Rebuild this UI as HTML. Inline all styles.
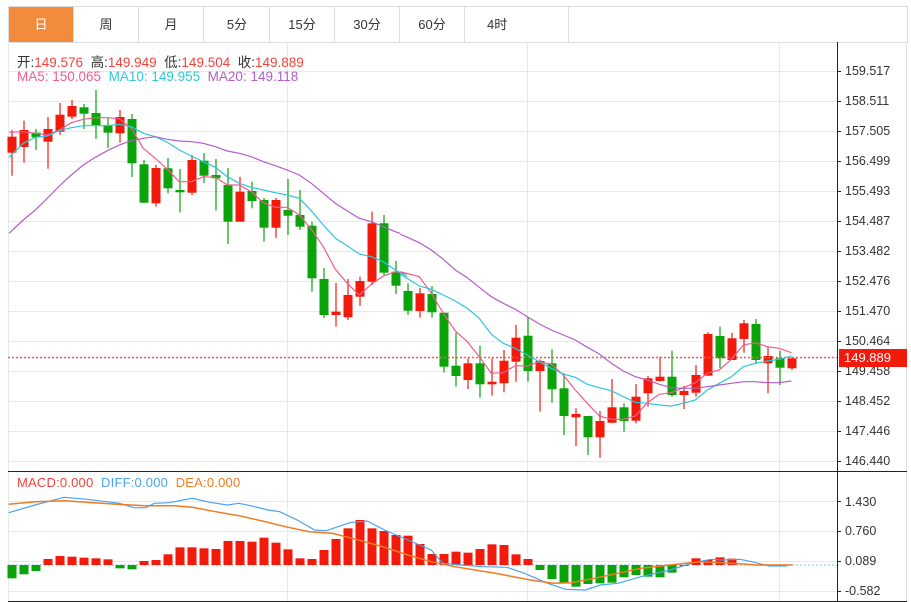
<!DOCTYPE html>
<html><head><meta charset="utf-8"><style>
body{margin:0;width:911px;height:602px;background:#fff;overflow:hidden;font-family:"Liberation Sans","Noto Sans CJK SC",sans-serif;position:relative}
.tabs{position:absolute;left:8px;top:6px;width:898px;height:35px;border:1px solid #ddd;}
.tab{position:absolute;top:0;height:35px;line-height:35px;text-align:center;font-size:13px;color:#333;border-right:1px solid #ddd;width:64px}
.tab.on{background:#f38b3c;color:#fff}
.info{position:absolute;left:17px;font-size:13.5px;white-space:pre}
.lab{position:absolute;left:845px;font-size:12.5px;color:#333;line-height:14px}
</style></head><body>
<div class="tabs">
<div class="tab on" style="left:0">日</div>
<div class="tab" style="left:65px">周</div>
<div class="tab" style="left:130px">月</div>
<div class="tab" style="left:196px">5分</div>
<div class="tab" style="left:261px">15分</div>
<div class="tab" style="left:326px">30分</div>
<div class="tab" style="left:391px">60分</div>
<div class="tab" style="left:456px;width:103px;text-align:left;padding-left:0"><span style="margin-left:22px">4时</span></div>
</div>
<svg id="s" width="911" height="602" style="position:absolute;left:0;top:0"></svg>
<div class="info" style="top:51px;color:#333">开:<span style="color:#f0433b">149.576</span>  高:<span style="color:#f0433b">149.949</span>  低:<span style="color:#f0433b">149.504</span>  收:<span style="color:#f0433b">149.889</span></div>
<div class="info" style="top:69px"><span style="color:#f25c8c">MA5: 150.065</span>  <span style="color:#2ec6dc">MA10: 149.955</span>  <span style="color:#b45cc8">MA20: 149.118</span></div>
<div class="info" style="top:475px;font-size:13px;letter-spacing:0.2px"><span style="color:#f0433b">MACD:0.000</span>  <span style="color:#4aa3f0">DIFF:0.000</span>  <span style="color:#f07b22">DEA:0.000</span></div>
<div class="lab" style="top:64px">159.517</div>
<div class="lab" style="top:94px">158.511</div>
<div class="lab" style="top:124px">157.505</div>
<div class="lab" style="top:154px">156.499</div>
<div class="lab" style="top:184px">155.493</div>
<div class="lab" style="top:214px">154.487</div>
<div class="lab" style="top:244px">153.482</div>
<div class="lab" style="top:274px">152.476</div>
<div class="lab" style="top:304px">151.470</div>
<div class="lab" style="top:334px">150.464</div>
<div class="lab" style="top:364px">149.458</div>
<div class="lab" style="top:394px">148.452</div>
<div class="lab" style="top:424px">147.446</div>
<div class="lab" style="top:454px">146.440</div>
<div style="position:absolute;left:839px;top:349px;width:68px;height:18px;background:#f21a0a;color:#fff;font-size:13px;line-height:18px;padding-left:5px;box-sizing:border-box">149.889</div>
<div class="lab" style="top:495px">1.430</div>
<div class="lab" style="top:524px">0.760</div>
<div class="lab" style="top:554px">0.089</div>
<div class="lab" style="top:584px">-0.582</div>
<script>
var s=document.getElementById('s'),h='';
function L(x1,y1,x2,y2,c,w,d){h+='<line x1="'+x1+'" y1="'+y1+'" x2="'+x2+'" y2="'+y2+'" stroke="'+c+'" stroke-width="'+(w||1)+'"'+(d?' stroke-dasharray="'+d+'"':'')+'/>';}
for(var k=0;k<14;k++){L(8,71.5+30*k,837,71.5+30*k,'#e3e9ef');}
[501.5,531.5,561.5,591.5].forEach(function(y){L(8,y,837,y,'#e3e9ef');});
[287.5,527.5,779.5].forEach(function(x){L(x,42,x,601,'#e3e9ef');});
L(8.5,42,8.5,601,'#e3e9ef');L(906.5,42,906.5,601,'#ddd');
L(837.5,42,837.5,601,'#222');L(8,471.5,907,471.5,'#222');L(8,601.5,907,601.5,'#222');
for(var k=0;k<14;k++)L(837,71.5+30*k,841,71.5+30*k,'#222');
[501.5,531.5,561.5,591.5].forEach(function(y){L(837,y,841,y,'#222');});
var C=[[1,136.7,152.7,130,175.7],[1,130,147,120.7,162.7],[0,132.7,137.3,129,150],[1,129,141.7,117,168.7],[1,114.7,131.7,103,135],[1,106,116.7,100,119],[0,107.3,113.7,104,129],[0,113,125,90,139],[0,125,132.7,117.7,148],[1,117,133.3,110,142.7],[0,119,163.3,114,177],[0,164.3,202.7,160,203],[1,168,203.3,165,206.7],[0,168.3,188.3,158,193.3],[0,190,192.3,169,212.3],[1,160,192.7,155,195],[0,160.7,175.7,153,183],[0,175,178.3,159,210.7],[0,185,221.7,168,244],[1,191.7,221.7,176.7,221.7],[0,191,201,181.7,208.3],[0,200,227.7,198,241.7],[1,200,227.7,198,238],[0,210,215.7,179,235],[0,215,226.7,190,230],[0,225.7,278.3,221.7,291.7],[0,279,315,268,318],[1,311.7,315,283,326.7],[1,295,317.3,279,320],[1,281,296.7,276.7,306],[1,223.3,281.7,211.7,285],[0,223.3,272.7,215,275],[0,271.7,285.7,261,294],[0,291,310.7,283.3,315],[1,293.3,311,288,317.7],[0,294,312.3,286,317.7],[0,312.7,366.7,312.7,372.7],[0,365.7,376,332.7,386.7],[1,363.3,380,358.3,389],[0,363.3,384.3,345.7,397.7],[1,381.7,384.3,358.3,395.7],[1,360.7,383.3,350,392.3],[1,337.7,361.7,325,381.7],[0,335.7,371,316.7,381.7],[1,361,371,359.3,411.7],[0,363.3,389.3,349.3,402.7],[0,388.3,416,373.3,435],[1,414,417.3,408.3,446],[0,416,437.3,416,455],[1,421,437.3,411,457.7],[1,407.3,422.7,379,423.3],[0,407.3,421,403.3,431.7],[1,396.7,420.7,384,423.3],[1,378.3,393.3,376,406.7],[1,376.7,381,356.7,381.7],[0,376.7,395,350.7,396.7],[1,391,395,386,409],[1,375,392.7,365,396.7],[1,334,375.7,332.3,375.7],[0,336,358.3,326.7,368.3],[1,338.3,360,332.7,360],[1,323.3,339,320,352.7],[0,324,360,319,364],[1,356,363.3,346.7,393.3],[0,358.3,367.7,350.7,385],[1,358.3,368.3,356.7,370]];
C.forEach(function(c,i){var x=12+12*i,col=c[0]?'#f21a0a':'#0aa30a';L(x,c[3],x,c[4],col,1.2);h+='<rect x="'+(x-4.5)+'" y="'+c[1]+'" width="9" height="'+Math.max(2,c[2]-c[1])+'" fill="'+col+'"/>';});
L(8,357.5,837,357.5,'#f55','1.5','2,2');
function P(pts,sx,sy,ox,oy,col,w){h+='<polyline fill="none" stroke="'+col+'" stroke-width="'+(w||1.2)+'" points="'+pts.map(function(p){return (p[0]/sx+ox).toFixed(1)+','+(p[1]/sy+oy).toFixed(1)}).join(' ')+'"/>';}
P([[27,157],[70,155],[106,160],[142,165],[178,150],[214,128],[250,118],[286,113],[322,113],[358,116],[394,145],[430,205],[466,235],[502,268],[538,305],[574,305],[610,290],[646,292],[682,315],[718,315],[754,335],[790,368],[826,382],[862,382],[898,405],[934,448],[970,500],[1006,568],[1042,610],[1078,645],[1114,613],[1150,588],[1186,575],[1222,582]],3,3,0,80,'#f25c8c');
P([[0,215],[58,230],[94,280],[130,340],[166,393],[202,425],[238,470],[274,520],[310,518],[346,497],[382,498],[418,485],[454,493],[490,525],[526,570],[562,610],[598,648],[634,658],[670,658],[706,648],[742,608],[778,583],[814,578],[850,563],[886,548],[922,520],[958,510],[994,478],[1030,435],[1066,428],[1102,440],[1138,445],[1174,458]],3,3,400,200,'#f25c8c');
P([[27,232],[70,190],[106,172],[142,168],[178,152],[214,143],[250,137],[286,137],[322,137],[358,133],[394,140],[430,160],[466,170],[502,187],[538,210],[574,228],[610,245],[646,262],[682,290],[718,310],[754,322],[790,330],[826,338],[862,345],[898,355],[934,392],[970,435],[1006,475],[1042,497],[1078,522],[1114,530],[1150,545],[1186,570],[1222,590]],3,3,0,80,'#2ec6dc');
P([[0,222],[58,258],[94,268],[130,285],[166,303],[202,325],[238,355],[274,403],[310,430],[346,445],[382,465],[418,485],[454,505],[490,522],[526,532],[562,553],[598,563],[634,572],[670,590],[706,607],[742,610],[778,615],[814,618],[850,610],[886,600],[922,570],[958,550],[994,530],[1030,500],[1066,490],[1102,483],[1138,478],[1174,468]],3,3,400,200,'#2ec6dc');
P([[27,460],[70,420],[106,390],[142,355],[178,318],[214,285],[250,255],[286,232],[322,212],[358,195],[394,182],[430,175],[466,170],[502,178],[538,183],[574,185],[610,190],[646,200],[682,213],[718,220],[754,230],[790,245],[826,257],[862,270],[898,285],[934,310],[970,340],[1006,370],[1042,393],[1078,415],[1114,425],[1150,440],[1186,455],[1200,460]],3,3,0,80,'#b45cc8');
P([[0,102],[58,128],[94,150],[130,178],[166,210],[202,233],[238,262],[274,290],[310,310],[346,328],[382,350],[418,372],[454,390],[490,405],[526,420],[562,442],[598,462],[634,490],[670,513],[706,530],[742,540],[778,553],[814,563],[850,565],[886,565],[922,560],[958,555],[994,550],[1030,545],[1066,545],[1102,548],[1138,548],[1174,543]],3,3,400,200,'#b45cc8');
L(8,565,837,565,'#9fd8e8','1.5','2,2');
var B=[355,343,333,297,288,290,293,295,298,325,328,303,300,283,262,262,265,267,243,243,245,233,248,268,295,297,270,237,205,180,205,213,225,227,252,282,282,275,278,267,253,255,283,297,330,357,368,380,372,370,368,352,345,350,352,338,318,295,300,292,296,318,318,318,318];
B.forEach(function(v,i){var x=12+12*i,y=v/3+460,z=565,col=y>z?'#0aa30a':'#f21a0a';if(v==318&&i>60)return;h+='<rect x="'+(x-4.5)+'" y="'+Math.min(y,z)+'" width="9" height="'+Math.abs(y-z)+'" fill="'+col+'"/>';});
P([[15,158],[60,135],[110,112],[150,118],[205,130],[230,143],[250,143],[265,130],[290,128],[330,115],[360,127],[390,135],[410,130],[430,137],[460,150],[480,155],[510,180],[540,210],[560,212],[600,188],[630,183],[660,210],[700,240],[740,270],[760,310],[790,315],[830,320],[870,322],[900,340],[940,370],[970,388],[1005,390],[1030,375],[1060,370],[1100,350],[1150,330],[1190,308],[1220,298],[1240,300],[1270,298],[1290,305],[1320,318],[1350,318]],1.716,3,0,460,'#4aa3f0');
P([[15,133],[60,125],[110,122],[200,133],[250,137],[300,137],[330,142],[370,155],[410,167],[450,183],[490,200],[530,215],[570,220],[620,242],[660,262],[700,285],[740,305],[780,320],[850,340],[910,360],[950,370],[980,368],[1020,355],[1060,340],[1100,325],[1150,315],[1200,305],[1240,308],[1300,315],[1360,315]],1.716,3,0,460,'#f07b22',1.5);
s.innerHTML=h;
</script>
</body></html>
